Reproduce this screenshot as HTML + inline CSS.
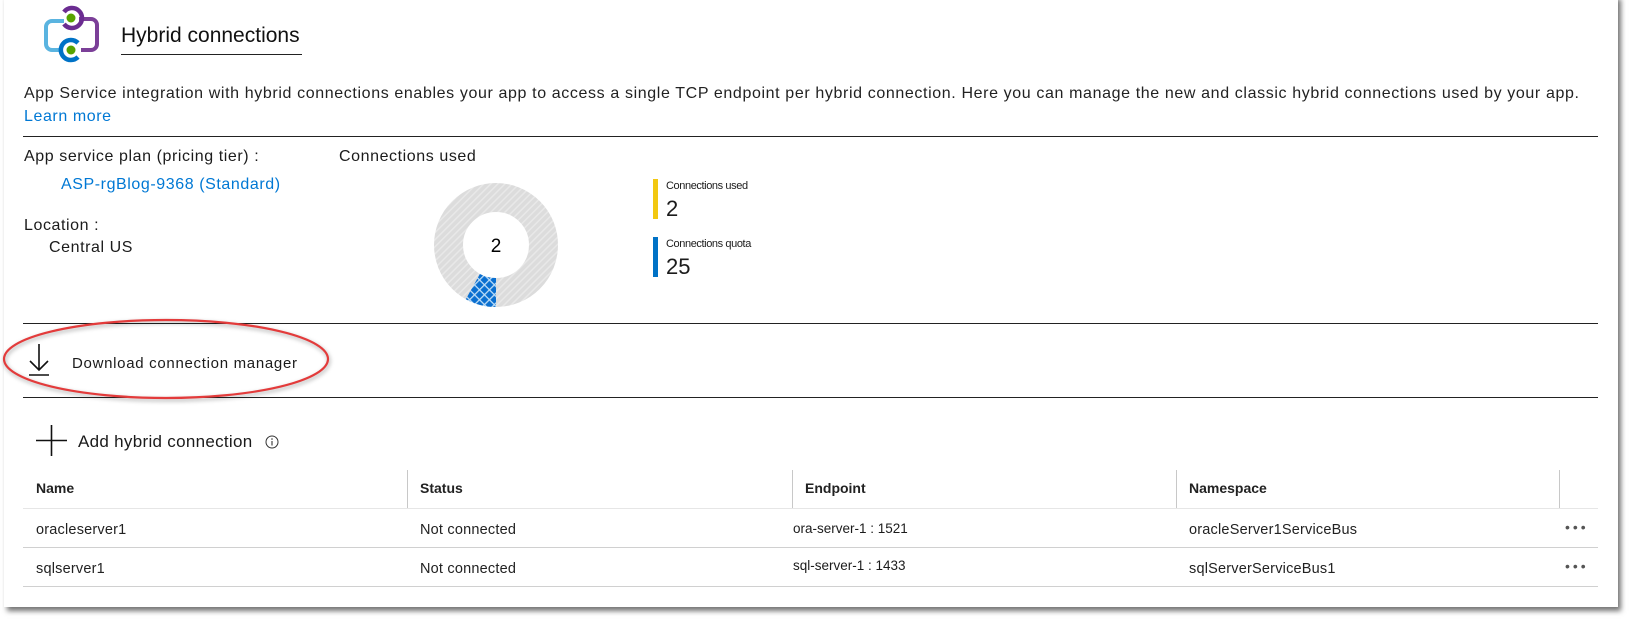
<!DOCTYPE html>
<html><head><meta charset="utf-8"><style>
body{margin:0;width:1634px;height:623px;background:#fff;position:relative;overflow:hidden;font-family:"Liberation Sans",sans-serif;color:#1b1b1b}
.a{position:absolute;white-space:nowrap}
.panel{position:absolute;left:4px;top:-5px;width:1614px;height:612px;background:#fff;box-shadow:3px 4px 5px rgba(0,0,0,.55)}
.hl{position:absolute;height:1px;background:#222}
.rl{position:absolute;height:1px;background:#d0d0d0;left:23px;width:1575px}
.vs{position:absolute;width:1px;background:#c8c8c8;top:470px;height:38px}
.th{font-size:14px;font-weight:bold;color:#222}
.td{font-size:14.5px;color:#222;letter-spacing:.2px}
.lb{font-size:16px;letter-spacing:.58px}
.blue{color:#0078d4}
</style></head><body>
<div class="panel"></div>
<svg class="a" style="left:38px;top:2px" width="66" height="62" viewBox="38 2 66 62">
<path d="M64 21 H52 a6 6 0 0 0 -6 6 V44 a6 6 0 0 0 6 6 H60" fill="none" stroke="#5ab4e0" stroke-width="4"/>
<path d="M79 19 H91 a6 6 0 0 1 6 6 V44 a6 6 0 0 1 -6 6 H81" fill="none" stroke="#7b3f98" stroke-width="4"/>
<path d="M64 12 A10 10 0 1 1 64 24" fill="none" stroke="#6b2c91" stroke-width="4.5"/>
<path d="M78 43 A10 10 0 1 0 78 57" fill="none" stroke="#0072c6" stroke-width="4.5"/>
<circle cx="71" cy="18" r="4.5" fill="#57a300"/>
<circle cx="71" cy="50" r="4.5" fill="#57a300"/>
</svg>
<div class="a" style="left:121px;top:24px;font-size:21px;color:#111">Hybrid connections</div>
<div class="hl" style="left:121px;top:54px;width:181px"></div>
<div class="a" style="left:24px;top:85px;font-size:16px;color:#222;letter-spacing:.62px">App Service integration with hybrid connections enables your app to access a single TCP endpoint per hybrid connection. Here you can manage the new and classic hybrid connections used by your app.</div>
<div class="a blue lb" style="left:24px;top:108px">Learn more</div>
<div class="hl" style="left:23px;top:136px;width:1575px"></div>
<div class="a lb" style="left:24px;top:148px">App service plan (pricing tier) :</div>
<div class="a lb" style="left:339px;top:148px">Connections used</div>
<div class="a blue lb" style="left:61px;top:176px">ASP-rgBlog-9368 (Standard)</div>
<div class="a lb" style="left:24px;top:217px">Location :</div>
<div class="a lb" style="left:49px;top:239px">Central US</div>
<svg class="a" style="left:430px;top:180px" width="132" height="132" viewBox="0 0 132 132">
<defs>
<pattern id="st" width="5" height="5" patternUnits="userSpaceOnUse" patternTransform="rotate(45)"><rect width="5" height="5" fill="#dcdcdc"/><rect width="1.5" height="5" fill="#e8e8e8"/></pattern>
<pattern id="hx" width="7" height="7" patternUnits="userSpaceOnUse" patternTransform="rotate(45)"><rect width="7" height="7" fill="#0a6fd0"/><rect width="1.3" height="7" fill="#bcdcf6"/><rect width="7" height="1.3" fill="#bcdcf6"/></pattern>
</defs>
<circle cx="66" cy="65" r="47.5" fill="none" stroke="url(#st)" stroke-width="29"/>
<path d="M66 127 A62 62 0 0 1 35.8 119.2 L49.9 94 A33 33 0 0 0 66 98 Z" fill="url(#hx)"/>
<text x="66" y="72" font-size="19" text-anchor="middle" font-family="Liberation Sans">2</text>
</svg>
<div class="a" style="left:653px;top:179px;width:5px;height:40px;background:#f2c811"></div>
<div class="a" style="left:666px;top:180px;font-size:11px;letter-spacing:-.4px">Connections used</div>
<div class="a" style="left:666px;top:196px;font-size:22px">2</div>
<div class="a" style="left:653px;top:237px;width:5px;height:40px;background:#0072c6"></div>
<div class="a" style="left:666px;top:238px;font-size:11px;letter-spacing:-.4px">Connections quota</div>
<div class="a" style="left:666px;top:254px;font-size:22px">25</div>
<div class="hl" style="left:23px;top:323px;width:1575px"></div>
<svg class="a" style="left:28px;top:343px" width="22" height="34" viewBox="0 0 22 34"><path d="M11 1 V27 M2 18 L11 27 L20 18 M1 32 H21" fill="none" stroke="#111" stroke-width="1.6"/></svg>
<div class="a" style="left:72px;top:355px;font-size:15px;letter-spacing:.7px">Download connection manager</div>
<div class="hl" style="left:23px;top:397px;width:1575px"></div>
<svg class="a" style="left:0;top:310px" width="340" height="100"><ellipse cx="166" cy="49" rx="162" ry="39" fill="none" stroke="#e33b3b" stroke-width="2.2" style="filter:drop-shadow(1px 2px 2px rgba(0,0,0,.35))"/></svg>
<svg class="a" style="left:36px;top:425px" width="31" height="31"><path d="M15.5 0 V31 M0 15.5 H31" stroke="#111" stroke-width="1.6"/></svg>
<div class="a" style="left:78px;top:432px;font-size:17px;letter-spacing:.3px">Add hybrid connection</div>
<svg class="a" style="left:265px;top:435px" width="14" height="14"><circle cx="7" cy="7" r="6" fill="none" stroke="#333" stroke-width="1"/><path d="M7 6 V10.5" stroke="#333" stroke-width="1.1"/><circle cx="7" cy="4" r=".8" fill="#333"/></svg>
<div class="vs" style="left:407px"></div><div class="vs" style="left:792px"></div><div class="vs" style="left:1176px"></div><div class="vs" style="left:1559px"></div>
<div class="a th" style="left:36px;top:480px">Name</div>
<div class="a th" style="left:420px;top:480px">Status</div>
<div class="a th" style="left:805px;top:480px">Endpoint</div>
<div class="a th" style="left:1189px;top:480px">Namespace</div>
<div class="rl" style="top:508px;background:#e6e6e6"></div>
<div class="rl" style="top:547px"></div>
<div class="rl" style="top:586px"></div>
<div class="a td" style="left:36px;top:522px">oracleserver1</div>
<div class="a td" style="left:420px;top:522px">Not connected</div>
<div class="a" style="left:793px;top:521px;font-size:13.5px">ora-server-1 : 1521</div>
<div class="a td" style="left:1189px;top:522px">oracleServer1ServiceBus</div>
<div class="a" style="left:1565px;top:519px;font-size:14px;letter-spacing:3px;color:#555">•••</div>
<div class="a td" style="left:36px;top:561px">sqlserver1</div>
<div class="a td" style="left:420px;top:561px">Not connected</div>
<div class="a" style="left:793px;top:558px;font-size:13.5px">sql-server-1 : 1433</div>
<div class="a td" style="left:1189px;top:561px">sqlServerServiceBus1</div>
<div class="a" style="left:1565px;top:558px;font-size:14px;letter-spacing:3px;color:#555">•••</div>
</body></html>
